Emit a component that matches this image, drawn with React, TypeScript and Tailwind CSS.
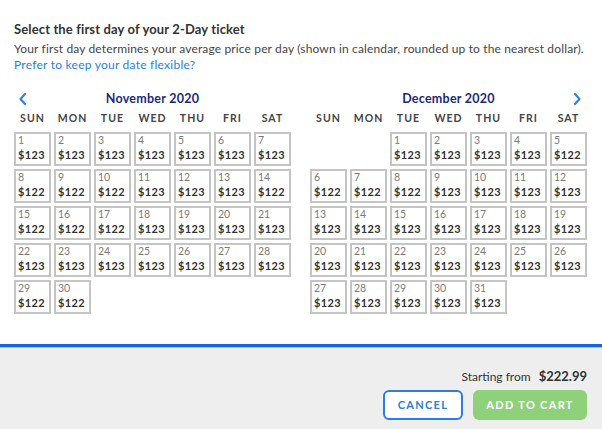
import React from 'react';

type Day = { d: number; p: number };

const nov: (Day | null)[] = [
  ...[123, 123, 123, 123, 123, 123, 123, 122, 122, 122, 123, 123, 123, 122, 122, 122, 122, 123, 123, 123, 123, 123, 123, 123, 123, 123, 123, 123, 122, 122].map(
    (p, i) => ({ d: i + 1, p })
  ),
];

const dec: (Day | null)[] = [
  null,
  null,
  ...[123, 123, 123, 123, 122, 122, 122, 122, 123, 123, 123, 123, 123, 123, 123, 123, 123, 123, 123, 123, 123, 123, 123, 123, 123, 123, 123, 123, 123, 123, 123].map(
    (p, i) => ({ d: i + 1, p })
  ),
];

const weekdays = ['SUN', 'MON', 'TUE', 'WED', 'THU', 'FRI', 'SAT'];

const Chevron = ({ dir }: { dir: 'left' | 'right' }) => (
  <svg width="8" height="12" viewBox="0 0 8 12" fill="none" stroke="#2a7de1" strokeWidth="2" strokeLinecap="round" strokeLinejoin="round">
    {dir === 'left' ? <path d="M6 1 L1.5 6 L6 11" /> : <path d="M2 1 L6.5 6 L2 11" />}
  </svg>
);

const Month = ({ title, days, nav }: { title: string; days: (Day | null)[]; nav: 'left' | 'right' }) => (
  <div className="w-[277px]">
    <div className="relative h-[20px] flex items-center justify-center">
      {nav === 'left' && (
        <span className="absolute left-[5px] top-[4px]">
          <Chevron dir="left" />
        </span>
      )}
      {nav === 'right' && (
        <span className="absolute right-[6px] top-[4px]">
          <Chevron dir="right" />
        </span>
      )}
      <span className="text-[12.5px] font-bold text-[#1c2a7a] tracking-[0.02em]">{title}</span>
    </div>
    <div className="grid grid-cols-7 gap-x-[3px] h-[20px] items-center">
      {weekdays.map((w) => (
        <div key={w} className="text-center text-[10.5px] font-bold tracking-[0.1em] text-[#444]">
          {w}
        </div>
      ))}
    </div>
    <div className="grid grid-cols-7 gap-[3px] mt-[3px]">
      {days.map((day, i) =>
        day ? (
          <div key={i} className="h-[34px] border-2 border-[#c4c4c4] px-[2px] pt-[1px] leading-none flex flex-col">
            <span className="text-[10.5px] text-[#7a7a7a] font-normal">{day.d}</span>
            <span className="text-[11px] font-bold text-[#333] mt-[3px] tracking-[0.03em]">${day.p}</span>
          </div>
        ) : (
          <div key={i} />
        )
      )}
    </div>
  </div>
);

export default function App() {
  return (
    <div className="w-[602px] h-[429px] bg-white flex flex-col font-['Lato','Noto_Sans',sans-serif] overflow-hidden">
      <div className="flex-1 px-[14px] pt-[21px]">
        <h1 className="text-[13px] font-bold text-[#333] leading-[16px] tracking-[0.01em]">Select the first day of your 2-Day ticket</h1>
        <p className="text-[12px] text-[#444] leading-[16px] mt-[4px] tracking-[0.012em] whitespace-nowrap">
          Your first day determines your average price per day (shown in calendar, rounded up to the nearest dollar).
        </p>
        <a className="block text-[12px] text-[#2a7de1] leading-[16px] tracking-[0.02em]">Prefer to keep your date flexible?</a>
        <div className="flex gap-[19px] mt-[16px]">
          <Month title="November 2020" days={nov} nav="left" />
          <Month title="December 2020" days={dec} nav="right" />
        </div>
      </div>
      <div className="h-[3px] bg-[#1565e0]" />
      <div className="h-[1px] bg-[#a9c6f0]" />
      <div className="h-[81px] bg-[#eeeeee] flex flex-col items-end pr-[15px] pt-[20px]">
        <div className="flex items-baseline gap-[8px] text-[#333] leading-[16px]">
          <span className="text-[12px]">Starting from</span>
          <span className="text-[13px] font-bold">$222.99</span>
        </div>
        <div className="flex gap-[10px] mt-[5px]">
          <button className="w-[80px] h-[30px] rounded-[6px] border-2 border-[#2a7de1] bg-white text-[#2a7de1] text-[11px] font-bold tracking-[0.12em]">
            CANCEL
          </button>
          <button className="w-[114px] h-[30px] rounded-[6px] bg-[#8fd07b] text-white text-[11px] font-bold tracking-[0.12em]">
            ADD TO CART
          </button>
        </div>
      </div>
    </div>
  );
}
